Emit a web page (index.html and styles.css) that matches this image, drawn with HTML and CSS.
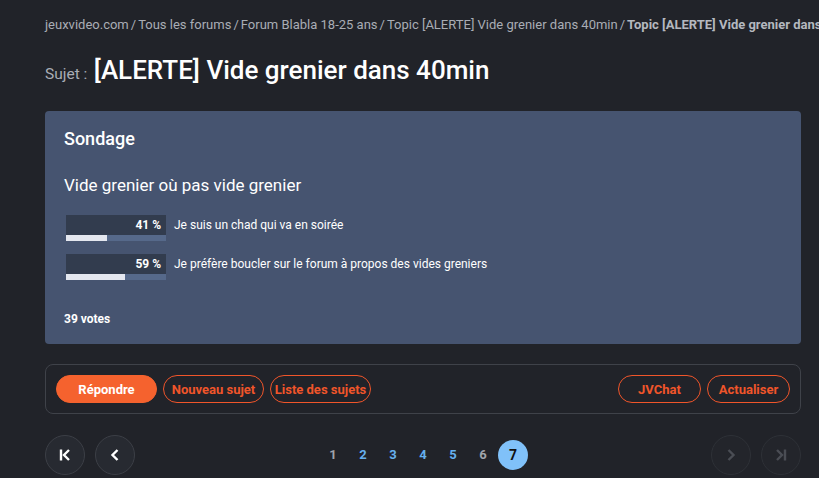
FILE: index.html
```html
<!DOCTYPE html>
<html lang="fr">
<head>
    <meta charset="UTF-8">
    <title>[ALERTE] Vide grenier dans 40min</title>
    <link rel="stylesheet" href="styles.css">
</head>
<body>
    <div class="page">
        <nav class="breadcrumb">
            <a href="#">jeuxvideo.com</a><span class="sep">/</span><a href="#">Tous les forums</a><span class="sep">/</span><a href="#">Forum Blabla 18-25 ans</a><span class="sep">/</span><a href="#">Topic [ALERTE] Vide grenier dans 40min</a><span class="sep">/</span><strong>Topic [ALERTE] Vide grenier dans 40min</strong>
        </nav>

        <h1 class="topic-title"><span class="topic-label">Sujet :</span> [ALERTE] Vide grenier dans 40min</h1>

        <div class="poll">
            <h2>Sondage</h2>
            <p class="poll-question">Vide grenier où pas vide grenier</p>

            <div class="poll-answers">
                <div class="poll-answer">
                    <div class="poll-bar">
                        <div class="poll-pct">41 %</div>
                        <div class="poll-track"><div class="poll-fill" style="width: 41%"></div></div>
                    </div>
                    <span class="poll-text">Je suis un chad qui va en soirée</span>
                </div>
                <div class="poll-answer">
                    <div class="poll-bar">
                        <div class="poll-pct">59 %</div>
                        <div class="poll-track"><div class="poll-fill" style="width: 59%"></div></div>
                    </div>
                    <span class="poll-text">Je préfère boucler sur le forum à propos des vides greniers</span>
                </div>
            </div>

            <p class="poll-votes">39 votes</p>
        </div>

        <div class="actions">
            <div class="actions-group">
                <button class="btn btn-primary">Répondre</button>
                <button class="btn">Nouveau sujet</button>
                <button class="btn">Liste des sujets</button>
            </div>
            <div class="actions-group">
                <button class="btn btn-wide">JVChat</button>
                <button class="btn btn-wide">Actualiser</button>
            </div>
        </div>

        <div class="pagination">
            <div class="pager-arrows">
                <span class="pager-btn">
                    <svg width="16" height="16" viewBox="0 0 16 16"><path d="M4 2.5v11" stroke="#fff" stroke-width="2.4" fill="none"/><path d="M12 3L7 8l5 5" stroke="#fff" stroke-width="2.4" fill="none"/></svg>
                </span>
                <span class="pager-btn">
                    <svg width="16" height="16" viewBox="0 0 16 16"><path d="M10.5 3L5.5 8l5 5" stroke="#fff" stroke-width="2.4" fill="none"/></svg>
                </span>
            </div>
            <div class="pages">
                <a href="#" class="page-link visited">1</a>
                <a href="#" class="page-link">2</a>
                <a href="#" class="page-link">3</a>
                <a href="#" class="page-link">4</a>
                <a href="#" class="page-link">5</a>
                <a href="#" class="page-link visited">6</a>
                <span class="page-link active">7</span>
            </div>
            <div class="pager-arrows pager-end">
                <span class="pager-btn disabled">
                    <svg width="16" height="16" viewBox="0 0 16 16"><path d="M5.5 3l5 5-5 5" stroke="#4a4d54" stroke-width="2.4" fill="none"/></svg>
                </span>
                <span class="pager-btn disabled">
                    <svg width="16" height="16" viewBox="0 0 16 16"><path d="M4 3l5 5-5 5" stroke="#4a4d54" stroke-width="2.4" fill="none"/><path d="M12 2.5v11" stroke="#4a4d54" stroke-width="2.4" fill="none"/></svg>
                </span>
            </div>
        </div>
    </div>
</body>
</html>
```

FILE: styles.css
```css
* {
    margin: 0;
    padding: 0;
    box-sizing: border-box;
}

body {
    font-family: Roboto, 'Liberation Sans', sans-serif;
    background-color: #212329;
    color: #fff;
    overflow: hidden;
}

.page {
    width: 756px;
    margin-left: 45px;
}

.breadcrumb {
    font-size: 13px;
    color: #a9adb5;
    white-space: nowrap;
    padding-top: 16px;
    line-height: 17px;
}

.breadcrumb a {
    color: #a9adb5;
    text-decoration: none;
}

.breadcrumb .sep {
    margin: 0 2px;
}

.breadcrumb strong {
    color: #b4b8bf;
}

.topic-title {
    font-size: 26px;
    font-weight: 500;
    margin-top: 20px;
    line-height: 34px;
    color: #fff;
}

.topic-label {
    font-size: 15.5px;
    font-weight: 400;
    color: #a9adb5;
}

.poll {
    background-color: #465470;
    border-radius: 4px;
    margin-top: 20px;
    padding: 17px 19px;
    height: 233px;
}

.poll h2 {
    font-size: 18px;
    font-weight: 500;
    line-height: 22px;
}

.poll-question {
    font-size: 17px;
    margin-top: 25px;
    line-height: 20px;
}

.poll-answers {
    display: flex;
    flex-direction: column;
    gap: 13px;
    margin-top: 20px;
    margin-left: 2px;
}

.poll-answer {
    display: flex;
    align-items: flex-start;
}

.poll-bar {
    width: 100px;
}

.poll-pct {
    background-color: #323c4e;
    height: 20px;
    font-size: 12px;
    font-weight: 700;
    text-align: right;
    padding-right: 5px;
    line-height: 20px;
}

.poll-track {
    height: 6px;
    background-color: #56698a;
}

.poll-fill {
    height: 100%;
    background-color: #e4e7ef;
}

.poll-text {
    font-size: 12px;
    margin-left: 8px;
    line-height: 20px;
}

.poll-votes {
    font-size: 12px;
    font-weight: 700;
    margin-top: 32px;
}

.actions {
    display: flex;
    justify-content: space-between;
    align-items: center;
    border: 1px solid #3f4249;
    border-radius: 8px;
    margin-top: 20px;
    height: 50px;
    padding: 0 10px;
}

.actions-group {
    display: flex;
    gap: 6px;
}

.btn {
    font-family: Roboto, 'Liberation Sans', sans-serif;
    font-size: 13px;
    font-weight: 700;
    color: #f0552a;
    background: none;
    border: 1px solid #f0552a;
    border-radius: 14px;
    height: 28px;
    width: 101px;
    cursor: pointer;
}

.btn-wide {
    width: 83px;
}

.btn-primary {
    background-color: #f5622e;
    border-color: #f5622e;
    color: #fff;
}

.pagination {
    display: flex;
    align-items: center;
    margin-top: 21px;
}

.pager-arrows {
    display: flex;
    gap: 10px;
}

.pager-end {
    margin-left: auto;
}

.pager-btn {
    width: 40px;
    height: 40px;
    border-radius: 50%;
    border: 1px solid #3c3f46;
    background-color: #272a31;
    display: flex;
    justify-content: center;
    align-items: center;
}

.pager-btn.disabled {
    background-color: #23252b;
    border-color: #2e3137;
}

.pages {
    display: flex;
    align-items: center;
    margin-left: 183px;
}

.page-link {
    width: 30px;
    height: 30px;
    line-height: 30px;
    text-align: center;
    font-size: 13px;
    font-weight: 700;
    color: #66b0ee;
    text-decoration: none;
}

.page-link.visited {
    color: #a0a4ab;
}

.page-link.active {
    background-color: #80c1f9;
    color: #111;
    border-radius: 50%;
    font-size: 14px;
}
```
